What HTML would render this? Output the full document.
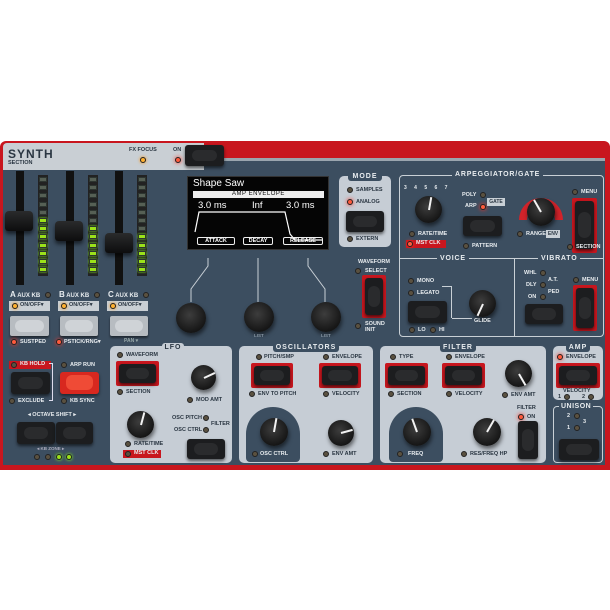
<!DOCTYPE html>
<html><head><meta charset="utf-8"><style>
*{margin:0;padding:0;box-sizing:border-box}
body{width:610px;height:610px;background:#fff;position:relative;overflow:hidden;font-family:"Liberation Sans",sans-serif}
.a{position:absolute}
.t{position:absolute;font-size:6.5px;font-weight:bold;color:#e8ecef;white-space:nowrap;line-height:1}
.d{color:#2a3642}
.led{position:absolute;width:6px;height:6px;border-radius:50%;background:#5a5140;border:1px solid #222}
.on{background:#ff5a3c;box-shadow:0 0 4px #ff3020}
.yo{background:#ffb030;box-shadow:0 0 3px #ff9000}
.btn{position:absolute;background:#1c1d1f;border-radius:3px;box-shadow:0 2px 3px rgba(0,0,0,.6)}
.btn::after{content:"";position:absolute;left:18%;right:18%;top:22%;bottom:22%;border-radius:8px;background:#2a2b2d}
.rf{position:absolute;background:#c8161e;border-radius:2px}
.k{position:absolute;border-radius:50%;background:radial-gradient(circle at 45% 40%,#3d3d3d,#161616 70%);box-shadow:1px 3px 4px rgba(0,0,0,.55)}
.k i{position:absolute;left:50%;top:50%;width:2px;margin-left:-1px;background:#f2f2f2;transform-origin:50% 0}
.box{position:absolute;background:#c6cdd5;border-radius:5px}
.tab{position:absolute;background:#c6cdd5;color:#2a3642;font-size:7px;font-weight:bold;letter-spacing:1px;text-align:center;border-radius:3px;line-height:9px}
.gb{position:absolute;background:#b7bcc1;border-radius:2px;box-shadow:0 2px 2px rgba(0,0,0,.5)}
.gb::after{content:"";position:absolute;left:14%;right:14%;top:18%;bottom:22%;border-radius:6px;background:#cfd3d7}
.seg{position:absolute;width:8px;height:5px;background:#566055;border:1px solid #2d3530}
.g{background:#9be21a;box-shadow:0 0 2px #8f2}
.fc{position:absolute;background:linear-gradient(#2a2b2c,#0d0d0e);border-radius:4px 4px 3px 3px;box-shadow:0 3px 4px rgba(0,0,0,.6)}
.dl{position:absolute;height:8px;border:1px solid #eee;border-radius:2px;color:#fff;font-size:5.5px;text-align:center;line-height:6px;font-weight:bold}
</style></head><body>
<div class="a" style="left:0;top:141px;width:610px;height:329px;background:#c8161e;border-radius:6px 6px 0 0"></div>
<div class="a" style="left:3px;top:160px;width:602px;height:305px;background:#3c4e60"></div>
<div class="a" style="left:3px;top:143px;width:201px;height:27px;background:#c9cfd4;border-radius:4px 0 0 0"></div>
<div class="a" style="left:204px;top:158px;width:401px;height:3px;background:#9aa5ae"></div>
<div class="t d" style="left:8px;top:148px;font-size:12px;letter-spacing:1px">SYNTH</div>
<div class="t d" style="left:8px;top:161px;font-size:5.5px">SECTION</div>
<div class="t d" style="left:129px;top:148px;font-size:5.5px">FX FOCUS</div>
<div class="led yo" style="left:140px;top:157px"></div>
<div class="t d" style="left:173px;top:148px;font-size:5.5px">ON</div>
<div class="led on" style="left:175px;top:157px"></div>
<div class="btn" style="left:185px;top:145px;width:39px;height:21px"></div>

<div class="a" style="left:16px;top:171px;width:8px;height:114px;background:#111"></div>
<div class="a" style="left:66px;top:171px;width:8px;height:114px;background:#111"></div>
<div class="a" style="left:115px;top:171px;width:8px;height:114px;background:#111"></div>
<div class="a" style="left:38px;top:175px;width:10px;height:101px;background:#222"></div>
<div class="a" style="left:88px;top:175px;width:10px;height:101px;background:#222"></div>
<div class="a" style="left:137px;top:175px;width:10px;height:101px;background:#222"></div>
<div id="m"></div>
<div class="fc" style="left:5px;top:211px;width:28px;height:20px"></div>
<div class="fc" style="left:55px;top:221px;width:28px;height:20px"></div>
<div class="fc" style="left:105px;top:233px;width:28px;height:20px"></div>

<div class="t" style="left:10px;top:291px;font-size:6px"><b style="font-size:8px">A</b> AUX KB</div>
<div class="t" style="left:59px;top:291px;font-size:6px"><b style="font-size:8px">B</b> AUX KB</div>
<div class="t" style="left:108px;top:291px;font-size:6px"><b style="font-size:8px">C</b> AUX KB</div>
<div class="led" style="left:45px;top:292px"></div><div class="led" style="left:94px;top:292px"></div><div class="led" style="left:143px;top:292px"></div>
<div class="a" style="left:9px;top:301px;width:41px;height:10px;background:#c9cfd4"></div>
<div class="a" style="left:58px;top:301px;width:41px;height:10px;background:#c9cfd4"></div>
<div class="a" style="left:107px;top:301px;width:41px;height:10px;background:#c9cfd4"></div>
<div class="led yo" style="left:12px;top:303px"></div><div class="led yo" style="left:61px;top:303px"></div><div class="led yo" style="left:110px;top:303px"></div>
<div class="t d" style="left:20px;top:303px;font-size:5.5px">ON/OFF▾</div>
<div class="t d" style="left:69px;top:303px;font-size:5.5px">ON/OFF▾</div>
<div class="t d" style="left:118px;top:303px;font-size:5.5px">ON/OFF▾</div>
<div class="gb" style="left:10px;top:316px;width:39px;height:20px"></div>
<div class="gb" style="left:60px;top:316px;width:38px;height:20px"></div>
<div class="gb" style="left:110px;top:316px;width:38px;height:20px"></div>
<div class="led on" style="left:11px;top:339px"></div><div class="t" style="left:20px;top:340px;font-size:5.5px">SUSTPED</div>
<div class="led on" style="left:56px;top:339px"></div><div class="t" style="left:64px;top:340px;font-size:5.5px">PSTICK/RNG▾</div>
<div class="t" style="left:124px;top:339px;font-size:5px;color:#9aa">PAN ▾</div>

<div class="a" style="left:9px;top:361px;width:42px;height:8px;background:#c8161e"></div>
<div class="led" style="left:11px;top:362px"></div><div class="t" style="left:20px;top:362px;font-size:5.5px">KB HOLD</div>
<div class="btn" style="left:11px;top:372px;width:39px;height:22px"></div>
<div class="led" style="left:9px;top:398px"></div><div class="t" style="left:18px;top:399px;font-size:5.5px">EXCLUDE</div>
<div class="a" style="left:49px;top:363px;width:4px;height:38px;border:1px solid #dde;border-left:none"></div>
<div class="led" style="left:61px;top:362px"></div><div class="t" style="left:70px;top:363px;font-size:5.5px">ARP RUN</div>
<div class="a" style="left:60px;top:372px;width:39px;height:22px;background:#d8281f;border-radius:3px;box-shadow:0 2px 3px rgba(0,0,0,.5)"></div>
<div class="a" style="left:66px;top:375px;width:27px;height:15px;background:#ef4b36;border-radius:6px"></div>
<div class="led" style="left:61px;top:398px"></div><div class="t" style="left:70px;top:399px;font-size:5.5px">KB SYNC</div>
<div class="t" style="left:28px;top:413px;font-size:5.5px">◂ OCTAVE SHIFT ▸</div>
<div class="btn" style="left:17px;top:422px;width:38px;height:22px"></div>
<div class="btn" style="left:56px;top:422px;width:37px;height:22px"></div>
<div class="t" style="left:37px;top:447px;font-size:4.5px;color:#aab">◂ KB ZONE ▸</div>
<div class="led" style="left:34px;top:454px"></div><div class="led" style="left:45px;top:454px"></div>
<div class="led" style="left:56px;top:454px;background:#9be21a;box-shadow:0 0 3px #8f2"></div><div class="led" style="left:66px;top:454px;background:#9be21a;box-shadow:0 0 3px #8f2"></div>

<div class="a" style="left:187px;top:176px;width:142px;height:74px;background:#050505;border:1px solid #333"></div>
<div class="t" style="left:193px;top:179px;font-size:10px;font-weight:normal;color:#fff">Shape Saw</div>
<div class="a" style="left:193px;top:191px;width:131px;height:7px;background:#eee;color:#111;font-size:6px;text-align:center;line-height:7px;letter-spacing:.5px">AMP ENVELOPE</div>
<div class="t" style="left:198px;top:201px;font-size:9.5px;font-weight:normal;color:#fff">3.0 ms</div>
<div class="t" style="left:252px;top:201px;font-size:9.5px;font-weight:normal;color:#fff">Inf</div>
<div class="t" style="left:286px;top:201px;font-size:9.5px;font-weight:normal;color:#fff">3.0 ms</div>
<svg class="a" style="left:187px;top:176px" width="142" height="74"><polyline points="8,56 12,36 98,36 103,58 108,64 136,64" fill="none" stroke="#fff" stroke-width="1.2"/></svg>
<div class="dl" style="left:197px;top:237px;width:38px">ATTACK</div>
<div class="dl" style="left:243px;top:237px;width:30px">DECAY</div>
<div class="dl" style="left:283px;top:237px;width:40px">RELEASE</div>
<svg class="a" style="left:180px;top:250px" width="160" height="60"><polyline points="28,8 28,16 11,39 11,52" fill="none" stroke="#c9d0d6" stroke-width="1"/><line x1="78" y1="8" x2="78" y2="52" stroke="#c9d0d6"/><polyline points="128,8 128,16 145,39 145,52" fill="none" stroke="#c9d0d6" stroke-width="1"/></svg>
<div class="k" style="left:176px;top:303px;width:30px;height:30px"></div>
<div class="k" style="left:244px;top:302px;width:30px;height:30px"></div>
<div class="k" style="left:311px;top:302px;width:30px;height:30px"></div>
<div class="t" style="left:254px;top:334px;font-size:4.5px;color:#8896a3">LIST</div>
<div class="t" style="left:321px;top:334px;font-size:4.5px;color:#8896a3">LIST</div>

<div class="box" style="left:339px;top:176px;width:52px;height:71px"></div>
<div class="tab" style="left:348px;top:172px;width:34px;background:#3c4e60;color:#e8ecef">MODE</div>
<div class="led" style="left:347px;top:187px"></div><div class="t d" style="left:356px;top:188px;font-size:5.5px">SAMPLES</div>
<div class="led on" style="left:347px;top:199px"></div><div class="t d" style="left:356px;top:200px;font-size:5.5px">ANALOG</div>
<div class="btn" style="left:346px;top:211px;width:38px;height:21px"></div>
<div class="led" style="left:347px;top:236px"></div><div class="t d" style="left:356px;top:237px;font-size:5.5px">EXTERN</div>
<div class="t" style="left:358px;top:260px;font-size:5.5px">WAVEFORM</div>
<div class="led" style="left:355px;top:268px"></div><div class="t" style="left:365px;top:269px;font-size:5.5px">SELECT</div>
<div class="rf" style="left:362px;top:275px;width:24px;height:43px"></div>
<div class="btn" style="left:365px;top:278px;width:18px;height:37px"></div>
<div class="led" style="left:355px;top:323px"></div><div class="t" style="left:365px;top:321px;font-size:5.5px;line-height:6px">SOUND<br>INIT</div>

<div class="a" style="left:399px;top:175px;width:205px;height:162px;border:1px solid #c9d0d6;border-radius:4px"></div>
<div class="a" style="left:399px;top:258px;width:205px;height:1px;background:#c9d0d6"></div>
<div class="a" style="left:514px;top:258px;width:1px;height:79px;background:#c9d0d6"></div>
<div class="t" style="left:452px;top:171px;padding:0 3px;background:#3c4e60;font-size:7px;letter-spacing:.8px">ARPEGGIATOR/GATE</div>
<div class="t" style="left:437px;top:255px;padding:0 3px;background:#3c4e60;font-size:7px;letter-spacing:.8px">VOICE</div>
<div class="t" style="left:538px;top:255px;padding:0 3px;background:#3c4e60;font-size:7px;letter-spacing:.8px">VIBRATO</div>
<div class="k" style="left:415px;top:196px;width:27px;height:27px"><i style="height:13px;transform:rotate(190deg)"></i></div>
<div class="t" style="left:404px;top:186px;font-size:5px;letter-spacing:3px">3 4 5 6 7</div>
<div class="led" style="left:409px;top:231px"></div><div class="t" style="left:418px;top:232px;font-size:5.5px">RATE/TIME</div>
<div class="a" style="left:406px;top:240px;width:40px;height:8px;background:#c8161e"></div>
<div class="led on" style="left:407px;top:241px"></div><div class="t" style="left:416px;top:241px;font-size:5.5px">MST CLK</div>
<div class="t" style="left:462px;top:193px;font-size:5.5px">POLY</div><div class="led" style="left:480px;top:192px"></div>
<div class="t" style="left:465px;top:204px;font-size:5.5px">ARP</div><div class="led on" style="left:480px;top:204px"></div>
<div class="a" style="left:487px;top:198px;width:18px;height:8px;background:#c9d0d6;color:#2a3642;font-size:5px;font-weight:bold;text-align:center;line-height:8px">GATE</div>
<div class="btn" style="left:463px;top:216px;width:39px;height:20px"></div>
<div class="led" style="left:463px;top:243px"></div><div class="t" style="left:472px;top:244px;font-size:5.5px">PATTERN</div>
<svg class="a" style="left:513px;top:186px" width="56" height="40"><path d="M6,34 A22,22 0 0 1 50,34 L42,34 A14,14 0 0 0 14,34 Z" fill="#d2232a"/></svg>
<div class="k" style="left:527px;top:198px;width:28px;height:28px"><i style="height:14px;transform:rotate(150deg)"></i></div>
<div class="led" style="left:517px;top:231px"></div><div class="t" style="left:526px;top:232px;font-size:5.5px">RANGE</div>
<div class="a" style="left:546px;top:230px;width:14px;height:8px;background:#c9d0d6;color:#2a3642;font-size:5px;font-weight:bold;text-align:center;line-height:8px">ENV</div>
<div class="led" style="left:572px;top:189px"></div><div class="t" style="left:581px;top:190px;font-size:5.5px">MENU</div>
<div class="rf" style="left:572px;top:198px;width:25px;height:55px"></div><div class="btn" style="left:575px;top:201px;width:19px;height:48px"></div>
<div class="led" style="left:567px;top:244px"></div><div class="t" style="left:576px;top:245px;font-size:5.5px">SECTION</div>
<div class="led" style="left:408px;top:278px"></div><div class="t" style="left:417px;top:279px;font-size:5.5px">MONO</div>
<div class="led" style="left:408px;top:290px"></div><div class="t" style="left:417px;top:291px;font-size:5.5px">LEGATO</div>
<div class="a" style="left:442px;top:286px;width:10px;height:32px;border:1px solid #c9d0d6;border-left:none;border-bottom:none"></div>
<div class="a" style="left:452px;top:318px;width:20px;height:1px;background:#c9d0d6"></div>
<div class="btn" style="left:408px;top:301px;width:39px;height:22px"></div>
<div class="led" style="left:409px;top:327px"></div><div class="t" style="left:418px;top:328px;font-size:5.5px">LO</div>
<div class="led" style="left:430px;top:327px"></div><div class="t" style="left:439px;top:328px;font-size:5.5px">HI</div>
<div class="k" style="left:469px;top:290px;width:27px;height:27px"><i style="height:13px;transform:rotate(25deg)"></i></div>
<div class="t" style="left:474px;top:319px;font-size:5.5px">GLIDE</div>
<div class="t" style="left:524px;top:271px;font-size:5.5px">WHL</div><div class="led" style="left:540px;top:270px"></div>
<div class="t" style="left:548px;top:278px;font-size:5.5px">A.T.</div>
<div class="t" style="left:526px;top:283px;font-size:5.5px">DLY</div><div class="led" style="left:540px;top:282px"></div>
<div class="t" style="left:548px;top:290px;font-size:5.5px">PED</div>
<div class="t" style="left:528px;top:295px;font-size:5.5px">ON</div><div class="led" style="left:540px;top:294px"></div>
<div class="btn" style="left:525px;top:304px;width:38px;height:20px"></div>
<div class="led" style="left:573px;top:277px"></div><div class="t" style="left:582px;top:278px;font-size:5.5px">MENU</div>
<div class="rf" style="left:573px;top:285px;width:24px;height:46px"></div><div class="btn" style="left:576px;top:288px;width:18px;height:40px"></div>

<div class="box" style="left:110px;top:346px;width:122px;height:117px"></div>
<div class="tab" style="left:162px;top:343px;width:22px">LFO</div>
<div class="led" style="left:117px;top:352px"></div><div class="t d" style="left:126px;top:353px;font-size:5.5px">WAVEFORM</div>
<div class="rf" style="left:116px;top:361px;width:43px;height:25px"></div><div class="btn" style="left:119px;top:364px;width:37px;height:19px"></div>
<div class="led" style="left:117px;top:389px"></div><div class="t d" style="left:126px;top:390px;font-size:5.5px">SECTION</div>
<div class="k" style="left:191px;top:365px;width:25px;height:25px"><i style="height:12px;transform:rotate(-115deg)"></i></div>
<div class="led" style="left:187px;top:397px"></div><div class="t d" style="left:196px;top:398px;font-size:5.5px">MOD AMT</div>
<div class="k" style="left:127px;top:411px;width:27px;height:27px"><i style="height:13px;transform:rotate(195deg)"></i></div>
<div class="led" style="left:125px;top:441px"></div><div class="t d" style="left:134px;top:442px;font-size:5.5px">RATE/TIME</div>
<div class="a" style="left:123px;top:450px;width:38px;height:8px;background:#c8161e"></div>
<div class="led" style="left:125px;top:451px"></div><div class="t" style="left:134px;top:451px;font-size:5.5px">MST CLK</div>
<div class="t d" style="left:172px;top:416px;font-size:5.5px">OSC PITCH</div><div class="led" style="left:203px;top:415px"></div>
<div class="t d" style="left:174px;top:428px;font-size:5.5px">OSC CTRL</div><div class="led" style="left:203px;top:427px"></div>
<div class="t d" style="left:211px;top:422px;font-size:5.5px">FILTER</div>
<div class="btn" style="left:187px;top:439px;width:38px;height:20px"></div>

<div class="box" style="left:239px;top:346px;width:134px;height:117px"></div>
<div class="tab" style="left:273px;top:343px;width:66px;background:#3c4e60;color:#e8ecef">OSCILLATORS</div>
<div class="led" style="left:256px;top:354px"></div><div class="t d" style="left:264px;top:355px;font-size:5.5px">PITCH/SMP</div>
<div class="led" style="left:323px;top:354px"></div><div class="t d" style="left:332px;top:355px;font-size:5.5px">ENVELOPE</div>
<div class="rf" style="left:251px;top:363px;width:42px;height:25px"></div><div class="btn" style="left:254px;top:366px;width:36px;height:19px"></div>
<div class="rf" style="left:319px;top:363px;width:42px;height:25px"></div><div class="btn" style="left:322px;top:366px;width:36px;height:19px"></div>
<div class="led" style="left:249px;top:391px"></div><div class="t d" style="left:258px;top:392px;font-size:5.5px">ENV TO PITCH</div>
<div class="led" style="left:323px;top:391px"></div><div class="t d" style="left:332px;top:392px;font-size:5.5px">VELOCITY</div>
<div class="a" style="left:246px;top:407px;width:54px;height:55px;background:#3c4e60;border-radius:27px 27px 4px 4px"></div>
<div class="k" style="left:260px;top:418px;width:28px;height:28px"><i style="height:14px;transform:rotate(190deg)"></i></div>
<div class="led" style="left:252px;top:451px"></div><div class="t" style="left:260px;top:452px;font-size:5.5px">OSC CTRL</div>
<div class="k" style="left:328px;top:420px;width:26px;height:26px"><i style="height:12px;transform:rotate(-105deg)"></i></div>
<div class="led" style="left:323px;top:451px"></div><div class="t d" style="left:332px;top:452px;font-size:5.5px">ENV AMT</div>

<div class="box" style="left:380px;top:346px;width:166px;height:117px"></div>
<div class="tab" style="left:440px;top:343px;width:36px;background:#3c4e60;color:#e8ecef">FILTER</div>
<div class="led" style="left:390px;top:354px"></div><div class="t d" style="left:399px;top:355px;font-size:5.5px">TYPE</div>
<div class="led" style="left:446px;top:354px"></div><div class="t d" style="left:455px;top:355px;font-size:5.5px">ENVELOPE</div>
<div class="rf" style="left:385px;top:363px;width:43px;height:25px"></div><div class="btn" style="left:388px;top:366px;width:37px;height:19px"></div>
<div class="rf" style="left:442px;top:363px;width:43px;height:25px"></div><div class="btn" style="left:445px;top:366px;width:37px;height:19px"></div>
<div class="led" style="left:388px;top:391px"></div><div class="t d" style="left:397px;top:392px;font-size:5.5px">SECTION</div>
<div class="led" style="left:446px;top:391px"></div><div class="t d" style="left:455px;top:392px;font-size:5.5px">VELOCITY</div>
<div class="k" style="left:505px;top:360px;width:27px;height:27px"><i style="height:13px;transform:rotate(-30deg)"></i></div>
<div class="led" style="left:502px;top:392px"></div><div class="t d" style="left:511px;top:393px;font-size:5.5px">ENV AMT</div>
<div class="a" style="left:389px;top:407px;width:54px;height:55px;background:#3c4e60;border-radius:27px 27px 4px 4px"></div>
<div class="k" style="left:403px;top:418px;width:28px;height:28px"><i style="height:14px;transform:rotate(160deg)"></i></div>
<div class="led" style="left:397px;top:451px"></div><div class="t" style="left:408px;top:452px;font-size:5.5px">FREQ</div>
<div class="k" style="left:473px;top:418px;width:28px;height:28px"><i style="height:14px;transform:rotate(210deg)"></i></div>
<div class="led" style="left:461px;top:451px"></div><div class="t d" style="left:470px;top:452px;font-size:5.5px">RES/FREQ HP</div>
<div class="t d" style="left:517px;top:406px;font-size:5.5px">FILTER</div>
<div class="led on" style="left:518px;top:414px"></div><div class="t d" style="left:527px;top:415px;font-size:5.5px">ON</div>
<div class="btn" style="left:518px;top:421px;width:20px;height:38px"></div>

<div class="box" style="left:553px;top:346px;width:50px;height:54px"></div>
<div class="tab" style="left:566px;top:343px;width:24px;background:#3c4e60;color:#e8ecef">AMP</div>
<div class="led on" style="left:557px;top:354px"></div><div class="t d" style="left:566px;top:355px;font-size:5.5px">ENVELOPE</div>
<div class="rf" style="left:556px;top:363px;width:44px;height:25px"></div><div class="btn" style="left:559px;top:366px;width:38px;height:19px"></div>
<div class="t d" style="left:563px;top:389px;font-size:5.5px">VELOCITY</div>
<div class="t d" style="left:558px;top:395px;font-size:5.5px">1</div><div class="led" style="left:564px;top:394px"></div>
<div class="t d" style="left:582px;top:395px;font-size:5.5px">2</div><div class="led" style="left:588px;top:394px"></div>
<div class="a" style="left:553px;top:406px;width:50px;height:57px;border:1px solid #c9d0d6;border-radius:4px"></div>
<div class="t" style="left:559px;top:403px;padding:0 2px;background:#3c4e60;font-size:7px;letter-spacing:.5px">UNISON</div>
<div class="t" style="left:567px;top:414px;font-size:5.5px">2</div><div class="led" style="left:574px;top:413px"></div>
<div class="t" style="left:583px;top:420px;font-size:5.5px">3</div>
<div class="t" style="left:567px;top:426px;font-size:5.5px">1</div><div class="led" style="left:574px;top:425px"></div>
<div class="btn" style="left:559px;top:439px;width:40px;height:21px"></div>

<script>
var m=document.getElementById('m'),h='';
[[39,175,7],[89,175,6],[138,175,5]].forEach(function(c){for(var i=0;i<12;i++){var g=i>=12-c[2];h+='<div class="seg'+(g?' g':'')+'" style="left:'+c[0]+'px;top:'+(c[1]+2+i*8.2)+'px"></div>';}});
m.innerHTML=h;
</script>
</body></html>
